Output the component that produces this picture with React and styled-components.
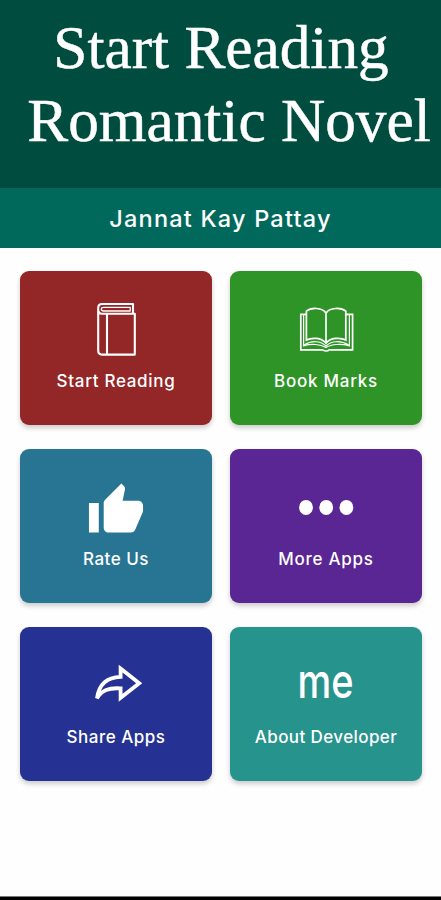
import React from 'react';
import styled, { createGlobalStyle } from 'styled-components';

const BookIcon = () => (
  <S.Icon viewBox="0 0 60 60">
    <g fill="none" stroke="#fff" strokeWidth="2.1" strokeLinejoin="round">
      <path d="M47 11.4V2H16C13.5 2 12.2 3.6 12.2 6V48.5C12.2 51 13.8 52.6 16 52.6H48.8V11.8H16C13.6 11.8 12.2 10 12.2 7.6" />
      <path d="M44.2 5.4H17.6C14.6 5.4 14.6 9 17.6 9H44.2Z" strokeWidth="1.3" />
      <path d="M21 12V52" />
    </g>
  </S.Icon>
);

const OpenBookIcon = () => (
  <S.Icon viewBox="0 0 60 60">
    <g fill="none" stroke="#fff" strokeWidth="1.7">
      <path d="M30 11.2C26.5 5.4 15 5.2 10.4 9.2V38C16 35.2 25.5 35.6 30 41.2C34.2 35.6 44.2 35.2 49.8 38V9.2C45.2 5.2 33.4 5.4 30 11.2V41.2" />
      <path d="M10.4 12.4H4.8V47.8H26.6C28 49.4 32 49.4 33.2 47.8H56.6V12.4H49.8" />
      <path d="M7.6 12.5V43.8C15 41.6 24.5 42 30 45.6C35.4 42 45.2 41.6 53.4 43.8V12.5" strokeWidth="1.2" />
      <path d="M8 43.2C15 38.4 25 38.4 30 44.2C34.8 38.4 45.2 38.4 53 43.2" strokeWidth="1.2" />
    </g>
  </S.Icon>
);

const ThumbIcon = () => (
  <S.Icon viewBox="-.2 -.4 24.4 24.4">
    <path
      fill="#fff"
      d="M1 21h4V9H1v12zm22-11c0-1.1-.9-2-2-2h-6.31l.95-4.57.03-.32c0-.41-.17-.79-.44-1.06L14.17 1 7.59 7.59C7.22 7.95 7 8.45 7 9v10c0 1.1.9 2 2 2h9c.83 0 1.54-.5 1.84-1.22l3.02-7.05c.09-.23.14-.47.14-.73v-2z"
    />
  </S.Icon>
);

const DotsIcon = () => (
  <S.Icon viewBox="0 0 60 60">
    {[10, 30.2, 50.4].map(cx => (
      <ellipse key={cx} cx={cx} cy="27.4" rx="6.9" ry="7.5" fill="#fff" />
    ))}
  </S.Icon>
);

const ShareIcon = () => (
  <S.Icon viewBox="0 0 60 60">
    <path
      fill="none"
      stroke="#fff"
      strokeWidth="3.8"
      d="M34.6 10.6L53.2 25.3L34.6 39.8V30.4C22.5 29.6 16 32.2 11 40.2C12.8 27 19.5 19.2 34.6 18.8Z"
    />
  </S.Icon>
);

const MeIcon = () => (
  <S.Icon viewBox="0 0 60 60">
    <S.MeText x="1.6" y="40" textLength="56" lengthAdjust="spacingAndGlyphs">
      me
    </S.MeText>
  </S.Icon>
);

const App = () => {
  return (
    <S.Screen>
      <GlobalStyle />
      <S.Header>
        <S.Title>
          <S.TitleLine $shift={1}>Start Reading</S.TitleLine>
          <S.TitleLine $shift={17}>Romantic Novel</S.TitleLine>
        </S.Title>
      </S.Header>
      <S.NameBar>Jannat Kay Pattay</S.NameBar>
      <S.Menu>
        {MENU_LIST.map(({ id, title, color, spacing, Icon }) => (
          <S.MenuCard key={id} $color={color}>
            <Icon />
            <S.MenuText $spacing={spacing}>{title}</S.MenuText>
          </S.MenuCard>
        ))}
      </S.Menu>
      <S.BottomEdge />
    </S.Screen>
  );
};
export default App;

const MENU_LIST = [
  { id: 1, title: 'Start Reading', color: '#932627', spacing: 0.7, Icon: BookIcon },
  { id: 2, title: 'Book Marks', color: '#2f9427', spacing: 0.75, Icon: OpenBookIcon },
  { id: 3, title: 'Rate Us', color: '#277593', spacing: 0.5, Icon: ThumbIcon },
  { id: 4, title: 'More Apps', color: '#592693', spacing: 0.75, Icon: DotsIcon },
  { id: 5, title: 'Share Apps', color: '#263293', spacing: 0.5, Icon: ShareIcon },
  { id: 6, title: 'About Developer', color: '#27938d', spacing: 0.4, Icon: MeIcon },
];

const GlobalStyle = createGlobalStyle`
  * {
    box-sizing: border-box;
  }

  body {
    margin: 0;
    background-color: #fff;
  }
`;

const S = {
  Screen: styled.div`
    display: flex;
    flex-direction: column;
    width: 441px;
    height: 900px;
    overflow: hidden;
    background-color: #fefefe;
    color: #fff;
  `,

  Header: styled.header`
    height: 188px;
    padding-top: 11px;
    background-color: #004d40;
  `,

  Title: styled.h1`
    display: flex;
    flex-direction: column;
    align-items: center;
    margin: 0;
    font-family: 'Liberation Serif', serif;
    font-size: 61.3px;
    font-weight: 400;
    line-height: 73px;
    white-space: nowrap;
    -webkit-text-stroke: 0.5px #fff;
  `,

  TitleLine: styled.span`
    margin-left: ${({ $shift }) => $shift}px;
  `,

  NameBar: styled.div`
    display: flex;
    align-items: center;
    justify-content: center;
    height: 60px;
    padding-top: 1px;
    background-color: #00695c;
    font-family: Inter, sans-serif;
    font-size: 23.5px;
    font-weight: 500;
    letter-spacing: 1.2px;
  `,

  Menu: styled.div`
    display: grid;
    flex: 1;
    grid-template-columns: repeat(2, 192px);
    grid-auto-rows: 154px;
    align-content: start;
    gap: 24px 18px;
    padding: 23px 20px 0;
  `,

  MenuCard: styled.div`
    display: flex;
    flex-direction: column;
    align-items: center;
    padding-top: 31px;
    border-radius: 9px;
    background-color: ${({ $color }) => $color};
    box-shadow: 0 3px 5px rgba(0, 0, 0, 0.2);
    cursor: pointer;
  `,

  Icon: styled.svg`
    display: block;
    width: 60px;
    height: 60px;
    overflow: visible;
  `,

  MeText: styled.text`
    fill: #fff;
    font-family: Inter, sans-serif;
    font-size: 47px;
    font-weight: 500;
  `,

  MenuText: styled.span`
    margin-top: 8px;
    font-family: Inter, sans-serif;
    font-size: 17px;
    font-weight: 500;
    letter-spacing: ${({ $spacing }) => $spacing}px;
    line-height: 22px;
    white-space: nowrap;
  `,

  BottomEdge: styled.div`
    height: 4px;
    border-top: 1px solid #777;
    background-color: #000;
  `,
};
